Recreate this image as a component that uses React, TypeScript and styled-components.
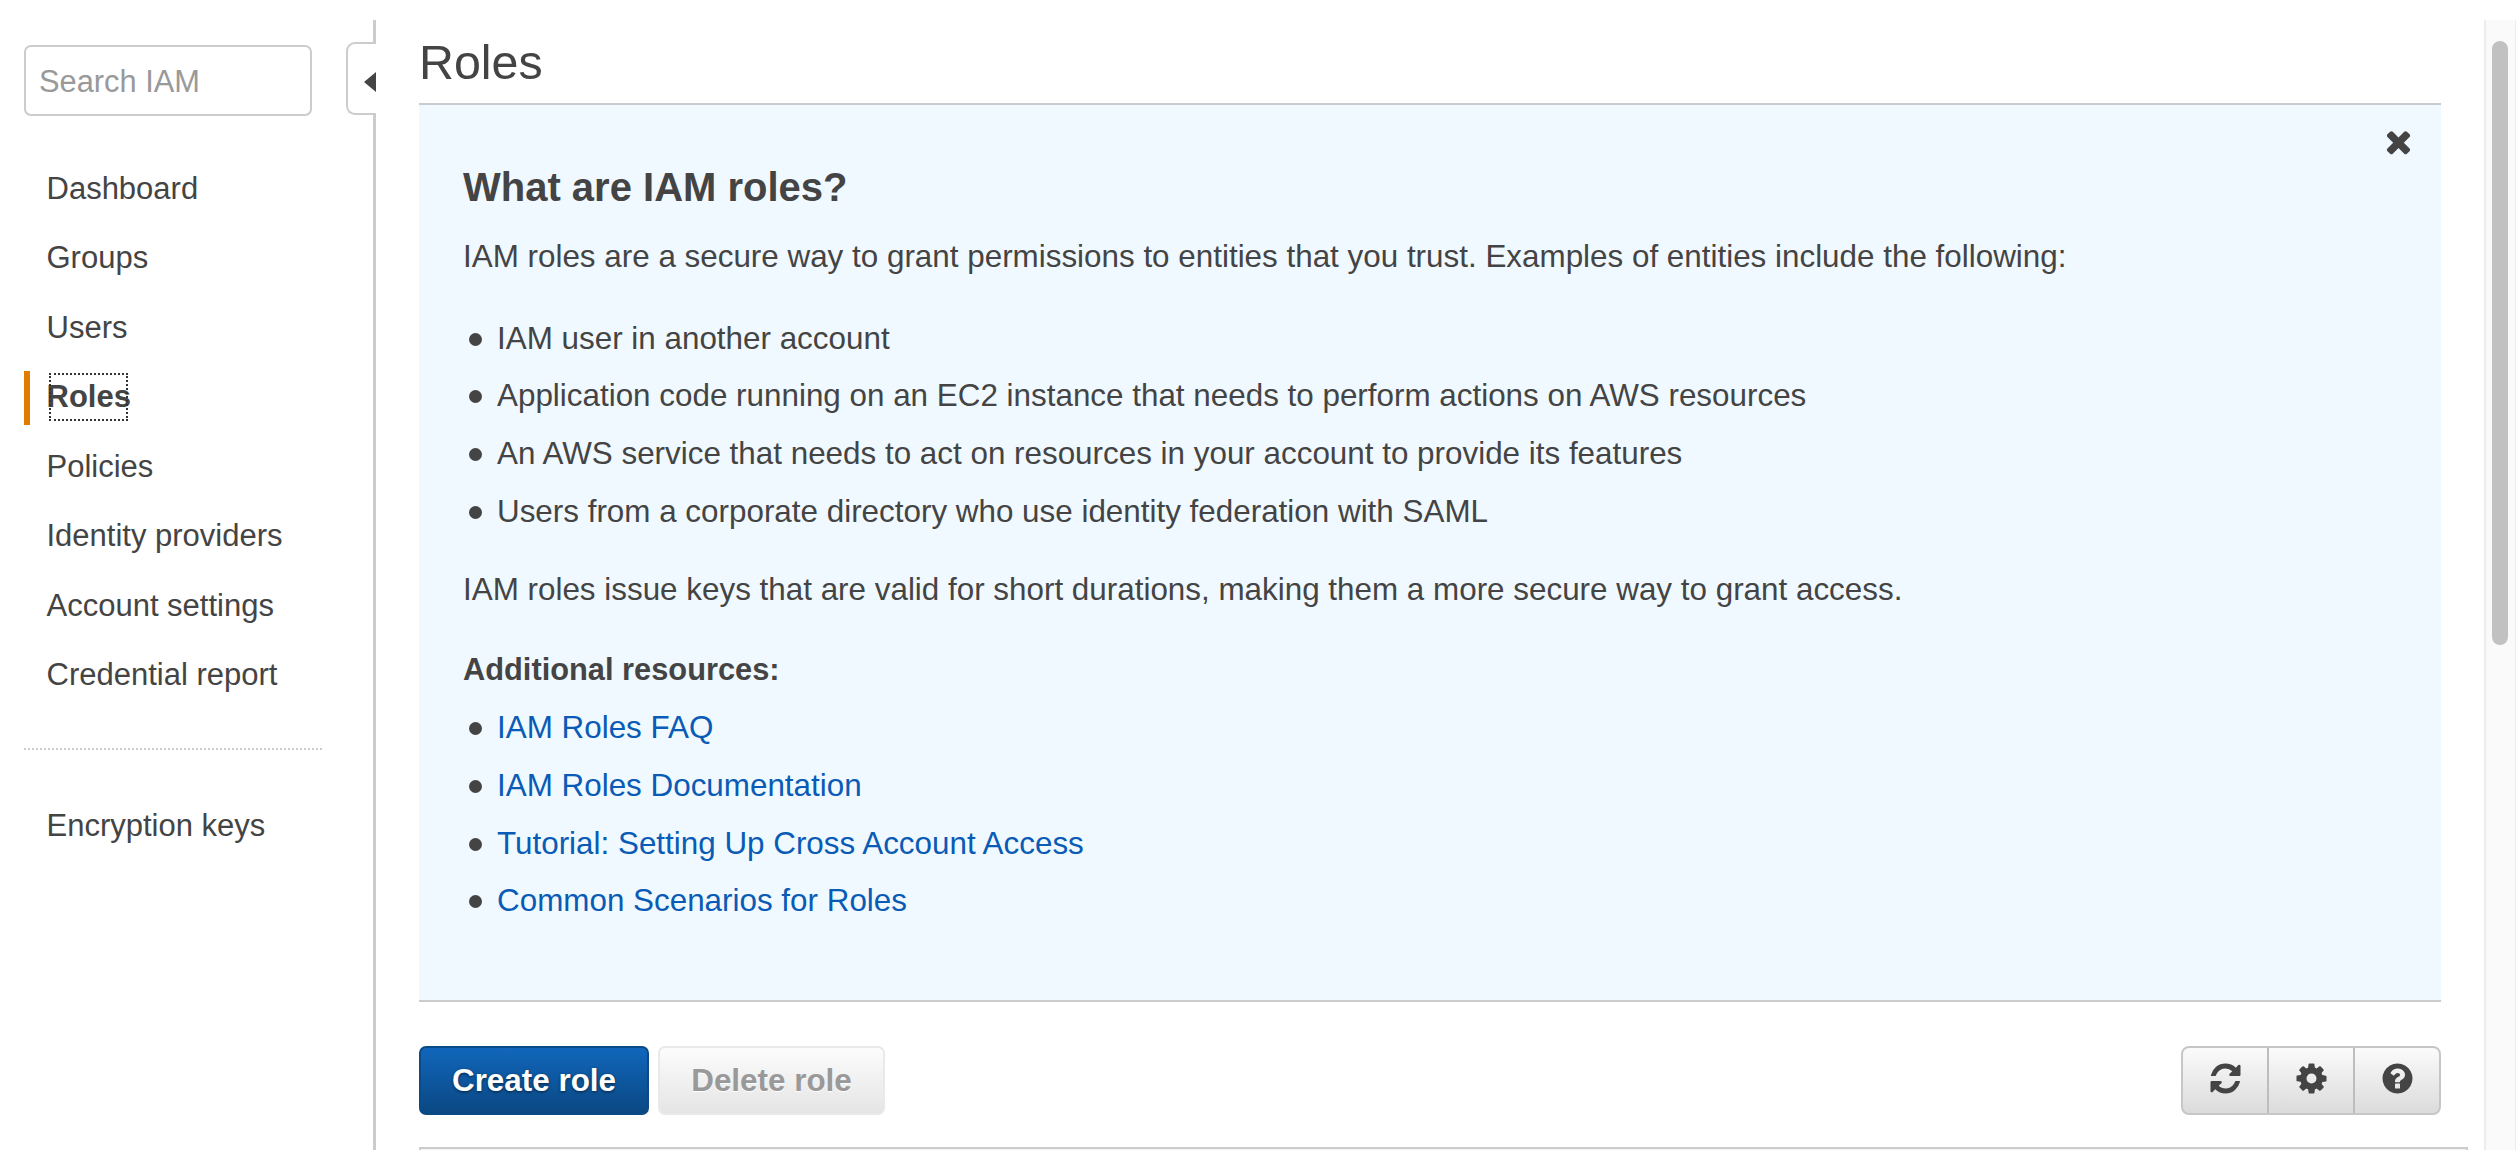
import React from 'react';
import styled, { createGlobalStyle } from 'styled-components';

const GlobalStyle = createGlobalStyle`
  html, body {
    margin: 0;
    padding: 0;
    background: #fff;
    overflow: hidden;
  }
  * {
    box-sizing: border-box;
  }
`;

const Page = styled.div`
  display: flex;
  height: 1150px;
  width: 2516px;
  padding-top: 20px;
  overflow: hidden;
  font-family: 'Liberation Sans', Arial, sans-serif;
  font-size: 30.8px;
  color: #444;
`;

const Sidebar = styled.aside`
  position: relative;
  flex: 0 0 376px;
  border-right: 3px solid #ccc;
  padding: 25px 0 0 24px;
`;

const SearchBox = styled.input`
  display: block;
  width: 288px;
  height: 71px;
  padding: 3px 13px 0;
  border: 2px solid #ccc;
  border-radius: 7px;
  background: #fff;
  font: inherit;
  color: #444;
  outline: none;

  &::placeholder {
    color: #999;
    opacity: 1;
  }
`;

const CollapseTab = styled.button`
  position: absolute;
  top: 22px;
  right: -3px;
  width: 30px;
  height: 73px;
  padding: 6px 0 0 16px;
  border: 2px solid #ccc;
  border-right: 0;
  border-radius: 9px 0 0 9px;
  background: #fff;
  display: flex;
  align-items: center;
`;

const NavList = styled.nav`
  margin: 38px 0 0 -24px;
`;

const NavItem = styled.div<{ $active?: boolean }>`
  display: flex;
  align-items: center;
  height: 69.5px;
  margin-left: 24px;
  padding-left: 22.5px;
  font-size: 31px;
  color: #444;
  font-weight: ${({ $active }) => ($active ? 700 : 400)};
  position: relative;

  ${({ $active }) =>
    $active &&
    `
    &::before {
      content: '';
      position: absolute;
      left: 0;
      top: 8px;
      bottom: 7px;
      width: 6px;
      background: #e07b00;
    }
  `}
`;

const FocusRing = styled.span`
  display: block;
  width: 75px;
  margin-left: 4px;
  line-height: 44px;
  text-indent: -4px;
  white-space: nowrap;
  outline: 2px dotted #333;
`;

const NavDivider = styled.div`
  width: 298px;
  margin: 38px 0 41.5px 24px;
  border-top: 2px dotted #ccc;
`;

const Main = styled.main`
  flex: 1;
  min-width: 0;
  padding: 0 18px 0 43px;
`;

const Title = styled.h1`
  margin: 0;
  height: 83px;
  font-size: 48.4px;
  font-weight: 400;
  line-height: 84px;
  color: #444;
`;

const InfoPanel = styled.section`
  position: relative;
  width: 2022px;
  height: 899px;
  padding: 53px 44px 0;
  font-size: 31.4px;
  background: #f0f9ff;
  border-top: 2px solid #c8ccd0;
  border-bottom: 2px solid #ccc;
`;

const CloseIcon = styled.svg`
  position: absolute;
  top: 19px;
  right: 25px;
  width: 35px;
  height: 35px;
  fill: #444;
`;

const PanelHeading = styled.h2`
  margin: 0;
  font-size: 40px;
  line-height: 58px;
  font-weight: 700;
  color: #444;
`;

const Paragraph = styled.p`
  margin: 12px 0 23.5px;
  line-height: 58px;
`;

const Bullets = styled.ul`
  list-style: none;
  margin: 0 0 20px;
  padding: 0;
`;

const Bullet = styled.li`
  position: relative;
  height: 57.8px;
  line-height: 58px;
  padding-left: 34px;

  &::before {
    content: '';
    position: absolute;
    left: 6px;
    top: 23px;
    width: 13px;
    height: 13px;
    border-radius: 50%;
    background: #444;
  }
`;

const SubHeading = styled.h3`
  margin: -1.6px 0 0.5px;
  font-size: 30.8px;
  line-height: 58px;
  font-weight: 700;
`;

const DocLink = styled.a`
  color: #0a5bb5;
  text-decoration: none;
`;

const Toolbar = styled.div`
  display: flex;
  align-items: center;
  justify-content: space-between;
  width: 2022px;
  height: 69px;
  margin-top: 44px;
`;

const ButtonRow = styled.div`
  display: flex;
  gap: 9px;
`;

const Button = styled.button<{ $primary?: boolean }>`
  height: 69px;
  width: ${({ $primary }) => ($primary ? '230px' : '227px')};
  padding: 0;
  border-radius: 7px;
  font: inherit;
  font-size: 31.4px;
  font-weight: 700;
  border: 2px solid ${({ $primary }) => ($primary ? '#0a4a86' : '#e9e9e9')};
  color: ${({ $primary }) => ($primary ? '#fff' : '#999')};
  background: ${({ $primary }) =>
    $primary
      ? 'linear-gradient(to bottom, #1166bb, #0a4883)'
      : 'linear-gradient(to bottom, #fcfcfc, #e5e5e5)'};
  text-shadow: ${({ $primary }) =>
    $primary ? '0 1px 3px rgba(0, 0, 0, 0.6)' : '0 1px 0 #fff'};
`;

const IconGroup = styled.div`
  display: flex;
  width: 260px;
  height: 69px;
  border: 2px solid #c6c6c6;
  border-radius: 8px;
  overflow: hidden;
  background: linear-gradient(to bottom, #fbfbfb, #dbdbdb);
`;

const IconButton = styled.button`
  flex: 1;
  display: flex;
  align-items: center;
  justify-content: center;
  padding: 0 0 4px;
  border: 0;
  border-left: 2px solid #bdbdbd;
  background: transparent;

  &:first-child {
    border-left: 0;
  }
`;

const FaIcon = styled.svg`
  width: 35px;
  height: 35px;
  fill: #444;
`;

const TableTop = styled.div`
  width: 2049px;
  height: 30px;
  margin-top: 32px;
  background: #f2f2f2;
  border-top: 2px solid #ccc;
  border-left: 2px solid #ccc;
  border-right: 2px solid #ccc;
`;

const ScrollTrack = styled.div`
  flex: 0 0 30px;
  padding: 21px 7px 0 6px;
  background: #fafafa;
  border-left: 2px solid #ececec;
  border-right: 1px solid #ececec;
`;

const ScrollThumb = styled.div`
  width: 16px;
  height: 604px;
  border-radius: 8px;
  background: #c1c1c1;
`;

const REFRESH =
  'M1639 1056q0 5-1 7-64 268-268 434.5t-478 166.5q-146 0-282.5-55t-243.5-157l-129 129q-19 19-45 19t-45-19-19-45v-448q0-26 19-45t45-19h448q26 0 45 19t19 45-19 45l-137 137q71 66 161 102t187 36q134 0 250-65t186-179q11-17 53-117 8-23 30-23h192q13 0 22.5 9.5t9.5 22.5zm25-800v448q0 26-19 45t-45 19h-448q-26 0-45-19t-19-45 19-45l138-138q-148-137-349-137-134 0-250 65t-186 179q-11 17-53 117-8 23-30 23h-199q-13 0-22.5-9.5t-9.5-22.5v-7q65-268 270-434.5t480-166.5q146 0 284 55.5t245 156.5l130-129q19-19 45-19t45 19 19 45z';
const COG =
  'M1152 896q0-106-75-181t-181-75-181 75-75 181 75 181 181 75 181-75 75-181zm512-109v222q0 12-8 23t-20 13l-185 28q-19 54-39 91 35 50 107 138 10 12 10 25t-9 23q-27 37-99 108t-94 71q-12 0-26-9l-138-108q-44 23-91 38-16 136-29 186-7 28-36 28h-222q-14 0-24.5-8.500t-11.500-21.500l-28-184q-49-16-90-37l-141 107q-10 9-25 9-14 0-25-11-126-114-165-168-7-10-7-23 0-12 8-23 15-21 51-66.500t54-70.500q-27-50-41-99l-183-27q-13-2-21-12.500t-8-23.500v-222q0-12 8-23t19-13l186-28q14-46 39-92-40-57-107-138-10-12-10-24 0-10 9-23 26-36 98.500-107.500t94.500-71.500q13 0 26 10l138 107q44-23 91-38 16-136 29-186 7-28 36-28h222q14 0 24.500 8.500t11.500 21.500l28 184q49 16 90 37l142-107q9-9 24-9 13 0 25 10 129 119 165 170 7 8 7 22 0 12-8 23-15 21-51 66.500t-54 70.500q26 50 41 98l183 28q13 2 21 12.500t8 23.500z';
const QUESTION =
  'M1024 1376v-192q0-14-9-23t-23-9h-192q-14 0-23 9t-9 23v192q0 14 9 23t23 9h192q14 0 23-9t9-23zm256-672q0-88-55.500-163t-138.500-116-170-41q-243 0-371 213-15 24 8 42l132 100q7 6 19 6 16 0 25-12 53-68 86-92 34-24 86-24 48 0 85.500 26t37.500 59q0 38-20 61t-68 45q-63 28-115.500 86.500t-52.500 125.500v36q0 14 9 23t23 9h192q14 0 23-9t9-23q0-19 21.500-49.500t54.500-49.500q32-18 49-28.500t46-35 44.500-48 28-60.500 12.500-81zm384 192q0 209-103 385.500t-279.500 279.500-385.500 103-385.500-103-279.500-279.500-103-385.500 103-385.500 279.500-279.500 385.500-103 385.500 103 279.500 279.500 103 385.500z';
const TIMES =
  'M1490 1322q0 40-28 68l-136 136q-28 28-68 28t-68-28l-294-294-294 294q-28 28-68 28t-68-28l-136-136q-28-28-28-68t28-68l294-294-294-294q-28-28-28-68t28-68l136-136q28-28 68-28t68 28l294 294 294-294q28-28 68-28t68 28l136 136q28 28 28 68t-28 68l-294 294 294 294q28 28 28 68z';

const navItems = ['Dashboard', 'Groups', 'Users', 'Roles', 'Policies', 'Identity providers', 'Account settings', 'Credential report'];

const App = () => (
  <>
    <GlobalStyle />
    <Page>
      <Sidebar>
        <SearchBox placeholder="Search IAM" />
        <CollapseTab aria-label="Collapse">
          <svg width="12" height="20" viewBox="0 0 12 20">
            <path d="M12 0v20L0 10z" fill="#444" />
          </svg>
        </CollapseTab>
        <NavList>
          {navItems.map((label) =>
            label === 'Roles' ? (
              <NavItem key={label} $active>
                <FocusRing>{label}</FocusRing>
              </NavItem>
            ) : (
              <NavItem key={label}>{label}</NavItem>
            ),
          )}
          <NavDivider />
          <NavItem>Encryption keys</NavItem>
        </NavList>
      </Sidebar>
      <Main>
        <Title>Roles</Title>
        <InfoPanel>
          <CloseIcon viewBox="0 0 1792 1792">
            <path d={TIMES} />
          </CloseIcon>
          <PanelHeading>What are IAM roles?</PanelHeading>
          <Paragraph>
            IAM roles are a secure way to grant permissions to entities that you trust. Examples of entities include the following:
          </Paragraph>
          <Bullets>
            <Bullet>IAM user in another account</Bullet>
            <Bullet>Application code running on an EC2 instance that needs to perform actions on AWS resources</Bullet>
            <Bullet>An AWS service that needs to act on resources in your account to provide its features</Bullet>
            <Bullet>Users from a corporate directory who use identity federation with SAML</Bullet>
          </Bullets>
          <Paragraph>IAM roles issue keys that are valid for short durations, making them a more secure way to grant access.</Paragraph>
          <SubHeading>Additional resources:</SubHeading>
          <Bullets>
            <Bullet><DocLink href="#">IAM Roles FAQ</DocLink></Bullet>
            <Bullet><DocLink href="#">IAM Roles Documentation</DocLink></Bullet>
            <Bullet><DocLink href="#">Tutorial: Setting Up Cross Account Access</DocLink></Bullet>
            <Bullet><DocLink href="#">Common Scenarios for Roles</DocLink></Bullet>
          </Bullets>
        </InfoPanel>
        <Toolbar>
          <ButtonRow>
            <Button $primary>Create role</Button>
            <Button disabled>Delete role</Button>
          </ButtonRow>
          <IconGroup>
            <IconButton aria-label="Refresh">
              <FaIcon viewBox="0 0 1792 1792"><path d={REFRESH} /></FaIcon>
            </IconButton>
            <IconButton aria-label="Settings">
              <FaIcon viewBox="0 0 1792 1792"><path d={COG} /></FaIcon>
            </IconButton>
            <IconButton aria-label="Help">
              <FaIcon viewBox="0 0 1792 1792"><path d={QUESTION} /></FaIcon>
            </IconButton>
          </IconGroup>
        </Toolbar>
        <TableTop />
      </Main>
      <ScrollTrack>
        <ScrollThumb />
      </ScrollTrack>
    </Page>
  </>
);

export default App;
